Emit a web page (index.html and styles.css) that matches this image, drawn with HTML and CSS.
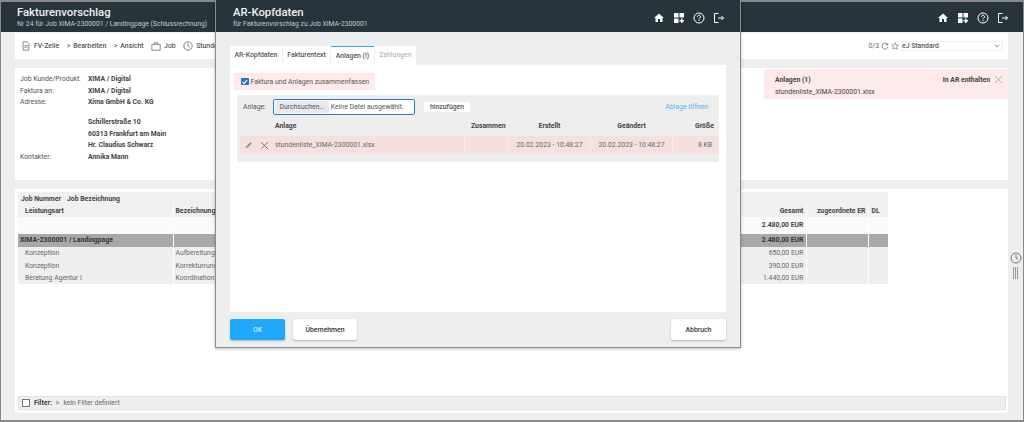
FILE: index.html
```html
<!DOCTYPE html>
<html lang="de">
<head>
    <meta charset="UTF-8">
    <meta name="viewport" content="width=device-width, initial-scale=1.0">
    <title>Fakturenvorschlag</title>
    <link rel="stylesheet" href="styles.css">
</head>
<body>
    <svg class="defs" width="0" height="0">
        <symbol id="i-home" viewBox="0 0 24 24"><path fill="currentColor" d="M10 20v-6h4v6h5v-8h3L12 3 2 12h3v8z"/></symbol>
        <symbol id="i-dash" viewBox="0 0 24 24"><path fill="currentColor" d="M2 2h9v9H2zM13 2h9v9h-9zM2 13h9v9H2zM16 13h3v3h3v3h-3v3h-3v-3h-3v-3h3z"/></symbol>
        <symbol id="i-help" viewBox="0 0 24 24"><circle cx="12" cy="12" r="10" fill="none" stroke="currentColor" stroke-width="2"/><path fill="none" stroke="currentColor" stroke-width="2" d="M9 9.5a3 3 0 1 1 4.6 2.5c-1 .7-1.6 1.3-1.6 2.6"/><rect x="11" y="16" width="2" height="2" fill="currentColor"/></symbol>
        <symbol id="i-exit" viewBox="0 0 24 24"><path fill="none" stroke="currentColor" stroke-width="2" d="M11 3H3v18h8M10 12h11M17 8l4 4-4 4"/></symbol>
        <symbol id="i-x" viewBox="0 0 12 12"><path fill="none" stroke="currentColor" stroke-width="1" d="M1.5 1.5l9 9M10.5 1.5l-9 9"/></symbol>
        <symbol id="i-clock" viewBox="0 0 12 12"><circle cx="6" cy="6" r="5" fill="none" stroke="currentColor" stroke-width=".9"/><path fill="none" stroke="currentColor" stroke-width=".9" d="M6 2.8V6l2.2 1.3"/></symbol>
    </svg>

    <div class="app">
        <header class="topbar">
            <div>
                <div class="title">Fakturenvorschlag</div>
                <div class="subtitle">Nr 24 für Job XIMA-2300001 / Landingpage (Schlussrechnung)</div>
            </div>
            <div class="topicons">
                <svg><use href="#i-home"/></svg>
                <svg><use href="#i-dash"/></svg>
                <svg><use href="#i-help"/></svg>
                <svg><use href="#i-exit"/></svg>
            </div>
        </header>

        <div class="main">
            <div class="content">
                <div class="card toolbar">
                    <div class="tools">
                        <span class="tool">
                            <svg class="tool-icon" viewBox="0 0 12 12"><path fill="none" stroke="#555" stroke-width=".8" d="M2.5 1h5l2 2.2V11h-7zM4 5.5h4M4 7.5h4"/></svg>
                            FV-Zeile
                        </span>
                        <span class="tool"><span class="chev">&gt;</span> Bearbeiten</span>
                        <span class="tool"><span class="chev">&gt;</span> Ansicht</span>
                        <span class="tool">
                            <svg class="tool-icon" viewBox="0 0 12 12"><path fill="none" stroke="#555" stroke-width=".8" d="M1 4h10v7H1zM4 4V2h4v2"/></svg>
                            Job
                        </span>
                        <span class="tool">
                            <svg class="tool-icon clock"><use href="#i-clock"/></svg>
                            Stunden
                        </span>
                    </div>
                    <div class="view">
                        <span class="count">0/3</span>
                        <svg class="view-icon" viewBox="0 0 12 12"><path fill="none" stroke="#555" stroke-width="1" d="M10 4a4.5 4.5 0 1 0 .5 3M10.3 1.5V4.3H7.5"/></svg>
                        <svg class="view-icon" viewBox="0 0 12 12"><path fill="none" stroke="#555" stroke-width=".8" d="M6 1l1.5 3.4 3.7.4-2.8 2.4.8 3.6L6 9l-3.2 1.8.8-3.6L.8 4.8l3.7-.4z"/></svg>
                        <div class="select">
                            <span>eJ Standard</span>
                            <svg class="select-arrow" viewBox="0 0 8 5"><path fill="none" stroke="#555" stroke-width=".9" d="M1 1l3 3 3-3"/></svg>
                        </div>
                    </div>
                </div>

                <div class="card info">
                    <div class="details">
                        <div class="label">Job Kunde/Produkt:</div><div class="value">XIMA / Digital</div>
                        <div class="label">Faktura an:</div><div class="value">XIMA / Digital</div>
                        <div class="label">Adresse:</div><div class="value">Xima GmbH &amp; Co. KG</div>
                        <div class="label"></div><div class="value"></div>
                        <div class="label"></div><div class="value">Schillerstraße 10</div>
                        <div class="label"></div><div class="value">60313 Frankfurt am Main</div>
                        <div class="label"></div><div class="value">Hr. Claudius Schwarz</div>
                        <div class="label">Kontakter:</div><div class="value">Annika Mann</div>
                    </div>
                    <div class="attachments">
                        <div class="att-head">
                            <strong>Anlagen (1)</strong>
                            <span class="att-right"><strong>In AR enthalten</strong><svg class="att-x"><use href="#i-x"/></svg></span>
                        </div>
                        <div class="att-file">stundenliste_XIMA-2300001.xlsx</div>
                    </div>
                </div>

                <div class="card jobs">
                    <div class="table-wrap">
                        <table class="jobtable">
                            <colgroup>
                                <col class="c-type"><col class="c-desc"><col class="c-total"><col class="c-er"><col class="c-dl">
                            </colgroup>
                            <thead>
                                <tr class="head1"><th colspan="5"><span class="job-no">Job Nummer</span>Job Bezeichnung</th></tr>
                                <tr class="head2">
                                    <th class="ind">Leistungsart</th><th>Bezeichnung</th>
                                    <th class="num">Gesamt</th><th class="num">zugeordnete ER</th><th>DL</th>
                                </tr>
                            </thead>
                            <tbody>
                                <tr class="sum"><td></td><td></td><td class="num">2.480,00 EUR</td><td></td><td></td></tr>
                                <tr class="group"><td>XIMA-2300001 / Landingpage</td><td></td><td class="num">2.480,00 EUR</td><td></td><td></td></tr>
                                <tr><td class="ind">Konzeption</td><td>Aufbereitung</td><td class="num">650,00 EUR</td><td></td><td></td></tr>
                                <tr><td class="ind">Konzeption</td><td>Korrekturrunde</td><td class="num">390,00 EUR</td><td></td><td></td></tr>
                                <tr><td class="ind">Beratung Agentur I</td><td>Koordination</td><td class="num">1.440,00 EUR</td><td></td><td></td></tr>
                            </tbody>
                        </table>
                    </div>
                    <div class="filter">
                        <span class="filter-box"></span>
                        <strong>Filter:</strong> <span class="chev">&gt;</span> kein Filter definiert
                    </div>
                </div>
            </div>

            <div class="rail">
                <svg class="rail-clock"><use href="#i-clock"/></svg>
                <div class="rail-grip"></div>
            </div>
        </div>

        <section class="modal">
            <header class="topbar modal-top">
                <div>
                    <div class="title">AR-Kopfdaten</div>
                    <div class="subtitle">für Fakturenvorschlag zu Job XIMA-2300001</div>
                </div>
                <div class="topicons">
                    <svg><use href="#i-home"/></svg>
                    <svg><use href="#i-dash"/></svg>
                    <svg><use href="#i-help"/></svg>
                    <svg><use href="#i-exit"/></svg>
                </div>
            </header>

            <div class="modal-body">
                <div class="tabs">
                    <div class="tab">AR-Kopfdaten</div>
                    <div class="tab">Fakturentext</div>
                    <div class="tab active">Anlagen (!)</div>
                    <div class="tab off">Zahlungen</div>
                </div>

                <div class="panel">
                    <label class="merge">
                        <span class="check"><svg viewBox="0 0 8 8"><path fill="none" stroke="#fff" stroke-width="1.2" d="M1.5 4.2l1.8 1.8 3.2-3.8"/></svg></span>
                        Faktura und Anlagen zusammenfassen
                    </label>

                    <div class="files">
                        <div class="upload">
                            <span class="upload-label">Anlage:</span>
                            <div class="file-input">
                                <span class="browse">Durchsuchen...</span>
                                <span>Keine Datei ausgewählt.</span>
                            </div>
                            <button class="add">hinzufügen</button>
                            <a class="open">Ablage öffnen</a>
                        </div>

                        <div class="row row-head">
                            <div class="cell c-name">Anlage</div>
                            <div class="cell c-merge">Zusammen</div>
                            <div class="cell c-date">Erstellt</div>
                            <div class="cell c-date">Geändert</div>
                            <div class="cell c-size">Größe</div>
                        </div>
                        <div class="row row-file">
                            <div class="cell c-name">
                                <svg class="pen" viewBox="0 0 10 10"><path fill="#999" d="M1 9l.6-2.4L6.8 1.4l1.8 1.8-5.2 5.2z"/></svg>
                                <svg class="del"><use href="#i-x"/></svg>
                                stundenliste_XIMA-2300001.xlsx
                            </div>
                            <div class="cell c-merge"></div>
                            <div class="cell c-date">20.02.2023 - 10:48:27</div>
                            <div class="cell c-date">20.02.2023 - 10:48:27</div>
                            <div class="cell c-size">8 KB</div>
                        </div>
                    </div>
                </div>

                <div class="actions">
                    <button class="btn ok">OK</button>
                    <button class="btn apply">Übernehmen</button>
                    <button class="btn cancel">Abbruch</button>
                </div>
            </div>
        </section>
    </div>
</body>
</html>
```

FILE: styles.css
```css
* {
    box-sizing: border-box;
}

html, body {
    margin: 0;
    height: 100%;
}

body {
    overflow: hidden;
    font-family: Roboto, "Liberation Sans", sans-serif;
    font-size: 6.85px;
    color: #444;
}

.defs {
    position: absolute;
}

.app {
    position: relative;
    display: flex;
    flex-direction: column;
    height: 422px;
    border: 1px solid #8a8a8a;
    border-width: 2px 1px 2px 1px;
    background-color: #eceef0;
}

/* dark bar, also used on top of the dialog */
.topbar {
    display: flex;
    flex: none;
    justify-content: space-between;
    align-items: center;
    height: 30px;
    padding: 1px 14px 0 16px;
    background-color: #27343c;
    color: #fff;
}

.title {
    font-size: 11.3px;
    font-weight: 500;
    line-height: 14px;
    color: #eef0f1;
}

.subtitle {
    font-size: 6.8px;
    line-height: 9px;
    color: #c3c9cc;
}

.topicons {
    display: flex;
    gap: 8px;
    align-items: center;
}

.topicons svg {
    width: 12px;
    height: 12px;
}

.main {
    display: flex;
    flex: 1;
    min-height: 0;
}

.content {
    display: flex;
    flex: 1;
    flex-direction: column;
    gap: 9px;
    padding: 1px 0 7px 14px;
    min-width: 0;
}

.card {
    background-color: #fff;
}

.chev {
    color: #666;
}

/* toolbar */
.toolbar {
    display: flex;
    flex: none;
    justify-content: space-between;
    align-items: center;
    height: 26px;
    padding: 0 5px 0 6px;
}

.tools {
    display: flex;
    gap: 7.5px;
    align-items: center;
    font-weight: 500;
    color: #555;
}

.tool {
    display: flex;
    gap: 3px;
    align-items: center;
}

.tool-icon {
    width: 10px;
    height: 10px;
}

.clock {
    color: #555;
}

.view {
    display: flex;
    gap: 2px;
    align-items: center;
    color: #666;
}

.view-icon {
    width: 8px;
    height: 8px;
}

.select {
    display: flex;
    justify-content: space-between;
    align-items: center;
    width: 102px;
    height: 10px;
    padding: 0 2px 0 1px;
    border: 1px solid #eee;
    border-left: 0;
    font-weight: 500;
    color: #555;
}

.select-arrow {
    width: 6px;
    height: 4px;
}

/* info card */
.info {
    display: flex;
    flex: none;
    justify-content: space-between;
    align-items: flex-start;
    height: 112px;
    padding-top: 1px;
}

.details {
    display: grid;
    grid-template-columns: 68px auto;
    grid-template-rows: repeat(3, 11.7px) 8px repeat(4, 11.7px);
    align-items: center;
    padding: 4px 0 0 5px;
}

.label {
    color: #555;
}

.value {
    font-weight: 700;
    color: #444;
}

.attachments {
    width: 244px;
    height: 30px;
    padding: 5px 5px 0 11px;
    background-color: #fdeaea;
    color: #444;
}

.att-head {
    display: flex;
    justify-content: space-between;
    align-items: center;
    height: 11px;
}

.att-right {
    display: flex;
    gap: 4px;
    align-items: center;
}

.att-x {
    width: 9px;
    height: 9px;
    color: #999;
}

.att-file {
    margin-top: 3px;
}

/* job table */
.jobs {
    display: flex;
    flex: 1;
    flex-direction: column;
    justify-content: space-between;
    padding: 3px 2px 3px 3px;
}

.jobtable {
    width: 870px;
    border-collapse: collapse;
    table-layout: fixed;
}

.c-type { width: 155px; }
.c-total { width: 66px; }
.c-er { width: 62px; }
.c-dl { width: 19px; }

.jobtable th,
.jobtable td {
    height: 12.6px;
    padding: 0 2px;
    overflow: hidden;
    white-space: nowrap;
    text-align: left;
}

.jobtable th {
    padding-top: 1px;
    font-weight: 700;
    color: #444;
    background-color: #f0f0f0;
}

.jobtable .head1 th {
    height: 12px;
    padding-left: 3px;
}

.job-no {
    margin-right: 6px;
}

.jobtable .head2 th + th,
.jobtable td + td {
    border-left: 1px solid #fff;
}

.jobtable .ind {
    padding-left: 7px;
}

.jobtable .num {
    padding-right: 3px;
    text-align: right;
}

.jobtable tbody td {
    background-color: #efefef;
    color: #666;
}

.jobtable .sum td {
    height: 17.5px;
    background-color: #fafafa;
    font-weight: 700;
    color: #444;
}

.jobtable .group td {
    background-color: #a8a8a8;
    font-weight: 700;
    color: #333;
}

.filter {
    display: flex;
    gap: 4px;
    align-items: center;
    height: 14px;
    padding-left: 3px;
    border: 1px solid #e2e2e2;
    background-color: #efefef;
    color: #666;
}

.filter strong {
    color: #444;
}

.filter-box {
    width: 8px;
    height: 8px;
    border: 1px solid #777;
    background-color: #fff;
}

/* right rail */
.rail {
    display: flex;
    flex: none;
    flex-direction: column;
    gap: 3px;
    align-items: center;
    width: 15px;
    padding: 220px 0 0 1px;
}

.rail-clock {
    width: 12px;
    height: 12px;
    color: #666;
}

.rail-grip {
    width: 6px;
    height: 12px;
    background: repeating-linear-gradient(90deg, #999 0 1px, transparent 1px 2px);
}

/* dialog */
.modal {
    position: absolute;
    top: -2px;
    left: 214px;
    display: flex;
    flex-direction: column;
    width: 526px;
    height: 348px;
    border: 1px solid #8a8a8a;
    border-top: 0;
    background-color: #eceef0;
    box-shadow: 0 1px 3px rgba(0, 0, 0, .25);
}

.modal-top {
    height: 32px;
    padding: 3px 15px 0 17px;
}

.modal-body {
    display: flex;
    flex: 1;
    flex-direction: column;
    padding: 14px 14px 7px;
}

.tabs {
    display: flex;
    gap: 1px;
    height: 19px;
}

.tab {
    padding: 0 4.5px;
    background-color: #fff;
    font-weight: 500;
    line-height: 19px;
    color: #555;
}

.tab.active {
    border-top: 1px solid #3aa6e8;
    line-height: 18px;
}

.tab.off {
    color: #bbb;
}

.panel {
    flex: 1;
    padding: 8px 7px 0 4px;
    background-color: #fff;
}

.merge {
    display: flex;
    gap: 2px;
    align-items: center;
    width: 141px;
    height: 17px;
    padding-left: 7px;
    background-color: #fdeaea;
    white-space: nowrap;
    color: #555;
}

.check {
    display: flex;
    width: 7.5px;
    height: 7.5px;
    border-radius: 1px;
    background-color: #2a6fc9;
}

.check svg {
    width: 7.5px;
    height: 7.5px;
}

.files {
    height: 67px;
    margin: 5px 0 0 3px;
    padding-top: 4px;
    background-color: #eeeeee;
    border-radius: 2px;
}

.upload {
    display: flex;
    align-items: center;
    height: 16px;
    padding: 0 11px 0 6px;
    color: #555;
}

.upload-label {
    width: 30px;
}

.file-input {
    display: flex;
    gap: 1.5px;
    align-items: center;
    width: 142px;
    height: 16px;
    padding-left: 1px;
    border: 1px solid #2a78c8;
    border-radius: 2px;
    background-color: #fff;
    white-space: nowrap;
}

.browse {
    padding: 2px 4.5px;
    border-radius: 1px;
    background-color: #e9e9ed;
}

.add {
    width: 46px;
    height: 10px;
    margin-left: 9px;
    padding: 0;
    border: 0;
    background-color: #fff;
    font: inherit;
    font-weight: 500;
    line-height: 10px;
    color: #555;
}

.open {
    margin-left: auto;
    color: #4fb6ec;
}

.row {
    display: flex;
    gap: 1px;
    margin: 0 1px 0 3px;
}

.row-head {
    align-items: center;
    height: 15px;
    margin-top: 3px;
    font-weight: 700;
    color: #444;
}

.row-file {
    height: 18px;
    margin-top: 3px;
    color: #666;
}

.cell {
    display: flex;
    align-items: center;
}

.row-file .cell {
    background-color: #f5e0e0;
}

.c-name {
    flex: 1;
    padding-left: 35px;
}

.row-file .c-name {
    padding-left: 5px;
}

.c-merge {
    justify-content: flex-end;
    width: 43px;
    padding-right: 2.5px;
}

.c-date {
    justify-content: center;
    width: 81px;
}

.c-size {
    justify-content: flex-end;
    width: 45px;
    padding-right: 4px;
}

.row-file .c-size {
    padding-right: 6px;
}

.pen {
    width: 8px;
    height: 8px;
}

.del {
    width: 9px;
    height: 9px;
    margin: 0 6px 0 7px;
    color: #555;
}

.actions {
    display: flex;
    gap: 8px;
    margin-top: 7px;
}

.btn {
    height: 21px;
    border: 0;
    border-radius: 2px;
    background-color: #fff;
    box-shadow: 0 1px 2px rgba(0, 0, 0, .25);
    font: inherit;
    font-weight: 500;
    color: #333;
}

.ok {
    width: 55px;
    background-color: #1fa8fb;
    color: #d8f0ff;
}

.apply {
    width: 64px;
}

.cancel {
    width: 55px;
    margin-left: auto;
}
```
